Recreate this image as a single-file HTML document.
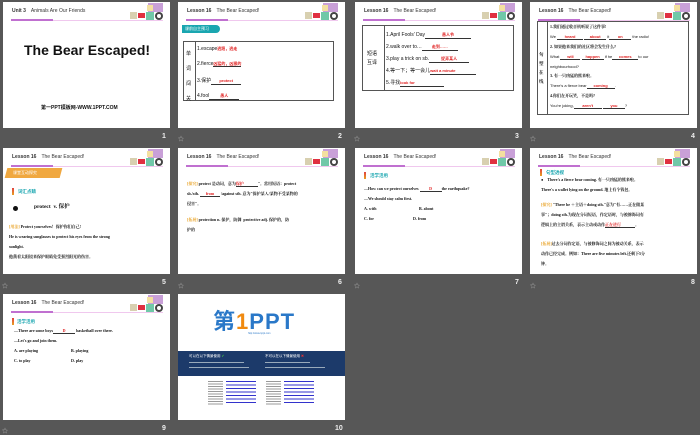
<!DOCTYPE html>
<html><head><meta charset="utf-8"><style>
*{margin:0;padding:0;box-sizing:border-box}
body{width:700px;height:433px;background:#575757;position:relative;overflow:hidden;font-family:"Liberation Sans","Noto Sans CJK SC",sans-serif}
.s{position:absolute;width:167px;height:126px;background:#fff;overflow:hidden}
.n{position:absolute;color:#eee;font-size:7px;font-weight:bold}
.st{position:absolute;color:#bbb;font-size:6px}
.hd{position:absolute;left:9px;top:6px;font-size:5px;color:#333}
.hd b{margin-right:5px}
.l1{position:absolute;left:8px;top:17px;width:42px;height:2px;background:#c070d0}
.l2{position:absolute;left:50px;top:17.5px;width:110px;height:1px;background:#f0c8ee}
.dec{position:absolute;left:127px;top:1px;width:34px;height:19px}
.t{position:absolute;font-size:4.6px;color:#111;white-space:nowrap;line-height:1}
.sf{font-family:"Liberation Serif","Noto Serif CJK SC",serif;font-weight:bold}
.r{color:#e02020;font-weight:bold}
.c{color:#1aa6b0;font-weight:bold}
.y{color:#e8a020}
.bar{position:absolute;width:2px;height:7px;background:linear-gradient(#e04040,#e8a020)}
</style></head><body>

<!-- Slide 1 -->
<div class="s" style="left:3px;top:2px">
<div class="hd"><b>Unit 3</b>Animals Are Our Friends</div>
<div class="l1"></div><div class="l2"></div>
<svg class="dec" viewBox="0 0 34 19"><rect x="18" y="0" width="15" height="9" fill="#c9a0d8"/><rect x="17" y="2" width="6" height="6" fill="#f4e0a0"/><rect x="0" y="9" width="7" height="7" fill="#d8d0b0"/><rect x="8" y="10" width="7" height="5" fill="#e03040"/><rect x="16" y="9" width="8" height="8" fill="#70c8a8"/><circle cx="29" cy="13" r="4" fill="#444"/><circle cx="29" cy="13" r="2" fill="#fff"/></svg>
<div class="t" style="left:21px;top:41px;font-size:14px;font-weight:bold;color:#111">The Bear Escaped!</div>
<div class="t" style="left:38px;top:104px;font-size:5px;font-weight:bold">第一PPT模板网-WWW.1PPT.COM</div>
</div>
<div class="n" style="left:162px;top:133px">1</div>

<!-- Slide 2 -->
<div class="s" style="left:178px;top:2px">
<div class="hd"><b>Lesson 16</b>The Bear Escaped!</div>
<div class="l1"></div><div class="l2"></div>
<svg class="dec" viewBox="0 0 34 19"><rect x="18" y="0" width="15" height="9" fill="#c9a0d8"/><rect x="17" y="2" width="6" height="6" fill="#f4e0a0"/><rect x="0" y="9" width="7" height="7" fill="#d8d0b0"/><rect x="8" y="10" width="7" height="5" fill="#e03040"/><rect x="16" y="9" width="8" height="8" fill="#70c8a8"/><circle cx="29" cy="13" r="4" fill="#444"/><circle cx="29" cy="13" r="2" fill="#fff"/></svg>
<div style="position:absolute;left:4px;top:23px;width:38px;height:8px;background:#1aa6b0;border-radius:0 4px 4px 0"></div>
<div class="t" style="left:7px;top:25px;color:#fff;font-size:4px">课前自主预习</div>
<div style="position:absolute;left:5px;top:39px;width:151px;height:60px;border:1px solid #555"></div>
<div style="position:absolute;left:17px;top:39px;width:1px;height:60px;background:#555"></div>
<div class="t" style="left:8px;top:45px;font-size:5px;line-height:15px;white-space:normal;width:8px">单词闯关</div>
<div class="t" style="left:19px;top:45px;font-size:5px">1.escape<span class="r" style="font-size:4px">逃跑，逃走</span></div>
<div class="t" style="left:19px;top:60px;font-size:5px">2.fierce<span class="r" style="font-size:4px;border-bottom:.5px solid #333">凶猛的，凶狠的</span></div>
<div class="t" style="left:19px;top:77px;font-size:5px">3.保护<span style="border-bottom:.5px solid #333;display:inline-block;width:30px;text-align:center"><span class="r" style="font-size:4px">protect</span></span></div>
<div class="t" style="left:19px;top:92px;font-size:5px">4.fool<span style="border-bottom:.5px solid #333;display:inline-block;width:30px;text-align:center"><span class="r" style="font-size:4px">愚人</span></span></div>
</div>
<div class="st" style="left:178px;top:134px">☆</div>
<div class="n" style="left:338px;top:133px">2</div>

<!-- Slide 3 -->
<div class="s" style="left:355px;top:2px">
<div class="hd"><b>Lesson 16</b>The Bear Escaped!</div>
<div class="l1"></div><div class="l2"></div>
<svg class="dec" viewBox="0 0 34 19"><rect x="18" y="0" width="15" height="9" fill="#c9a0d8"/><rect x="17" y="2" width="6" height="6" fill="#f4e0a0"/><rect x="0" y="9" width="7" height="7" fill="#d8d0b0"/><rect x="8" y="10" width="7" height="5" fill="#e03040"/><rect x="16" y="9" width="8" height="8" fill="#70c8a8"/><circle cx="29" cy="13" r="4" fill="#444"/><circle cx="29" cy="13" r="2" fill="#fff"/></svg>
<div style="position:absolute;left:7px;top:23px;width:152px;height:66px;border:1px solid #555"></div>
<div style="position:absolute;left:29px;top:23px;width:1px;height:66px;background:#555"></div>
<div class="t" style="left:12px;top:48px;font-size:5px;line-height:9px;white-space:normal;width:12px">短语互译</div>
<div class="t" style="left:31px;top:31px;font-size:5px">1.April Fools' Day<span style="border-bottom:.5px solid #333;display:inline-block;width:46px;text-align:center"><span class="r" style="font-size:4px">愚人节</span></span></div>
<div class="t" style="left:31px;top:43px;font-size:5px">2.walk over to…<span style="border-bottom:.5px solid #333;display:inline-block;width:36px;text-align:center"><span class="r" style="font-size:4px">走到……</span></span></div>
<div class="t" style="left:31px;top:55px;font-size:5px">3.play a trick on sb.<span style="border-bottom:.5px solid #333;display:inline-block;width:40px;text-align:center"><span class="r" style="font-size:4px">捉弄某人</span></span></div>
<div class="t" style="left:31px;top:67px;font-size:5px">4.等一下；等一会儿<span style="border-bottom:.5px solid #333;display:inline-block;width:46px"><span class="r" style="font-size:4px">wait a minute</span></span></div>
<div class="t" style="left:31px;top:79px;font-size:5px">5.寻找<span style="border-bottom:.5px solid #333;display:inline-block;width:44px"><span class="r" style="font-size:4px">look for</span></span></div>
</div>
<div class="st" style="left:354px;top:134px">☆</div>
<div class="n" style="left:515px;top:133px">3</div>

<!-- Slide 4 -->
<div class="s" style="left:530px;top:2px">
<div class="hd"><b>Lesson 16</b>The Bear Escaped!</div>
<div class="l1"></div><div class="l2"></div>
<svg class="dec" viewBox="0 0 34 19"><rect x="18" y="0" width="15" height="9" fill="#c9a0d8"/><rect x="17" y="2" width="6" height="6" fill="#f4e0a0"/><rect x="0" y="9" width="7" height="7" fill="#d8d0b0"/><rect x="8" y="10" width="7" height="5" fill="#e03040"/><rect x="16" y="9" width="8" height="8" fill="#70c8a8"/><circle cx="29" cy="13" r="4" fill="#444"/><circle cx="29" cy="13" r="2" fill="#fff"/></svg>
<div style="position:absolute;left:7px;top:19px;width:152px;height:94px;border:1px solid #555"></div>
<div style="position:absolute;left:17px;top:19px;width:1px;height:94px;background:#555"></div>
<div class="t sf" style="left:9px;top:48px;font-size:4.5px;line-height:9px;white-space:normal;width:7px">句型在线</div>
<div class="t sf" style="left:20px;top:23px;font-size:4px">1.我们通过收音机听说了这件事!</div>
<div class="t" style="left:20px;top:33px;font-size:4px">We <span class="r" style="display:inline-block;width:26px;border-bottom:.5px solid #333;text-align:center">heard</span> <span class="r" style="display:inline-block;width:22px;border-bottom:.5px solid #333;text-align:center">about</span> it<span class="r" style="display:inline-block;width:22px;border-bottom:.5px solid #333;text-align:center">on</span> the radio!</div>
<div class="t sf" style="left:20px;top:43px;font-size:4px">2. 如果他来我们的社区将会发生什么?</div>
<div class="t" style="left:20px;top:53px;font-size:4px">What <span class="r" style="display:inline-block;width:20px;border-bottom:.5px solid #333;text-align:center">will</span> <span class="r" style="display:inline-block;width:22px;border-bottom:.5px solid #333;text-align:center">happen</span> if he<span class="r" style="display:inline-block;width:26px;border-bottom:.5px solid #333;text-align:center">comes</span>to our</div>
<div class="t" style="left:20px;top:63px;font-size:4px">neighbourhood?</div>
<div class="t sf" style="left:20px;top:72px;font-size:4px">3. 有一只凶猛的熊来啦。</div>
<div class="t" style="left:20px;top:82px;font-size:4px">There's a fierce bear<span class="r" style="display:inline-block;width:28px;border-bottom:.5px solid #333;text-align:center">coming</span>.</div>
<div class="t sf" style="left:20px;top:92px;font-size:4px">4.你们在开玩笑，不是吗?</div>
<div class="t" style="left:20px;top:102px;font-size:4px">You're joking,<span class="r" style="display:inline-block;width:28px;border-bottom:.5px solid #333;text-align:center">aren't</span> <span class="r" style="display:inline-block;width:22px;border-bottom:.5px solid #333;text-align:center">you</span>?</div>
</div>
<div class="st" style="left:530px;top:134px">☆</div>
<div class="n" style="left:691px;top:133px">4</div>

<!-- Slide 5 -->
<div class="s" style="left:3px;top:148px">
<div class="hd"><b>Lesson 16</b>The Bear Escaped!</div>
<div class="l1"></div><div class="l2"></div>
<svg class="dec" viewBox="0 0 34 19"><rect x="18" y="0" width="15" height="9" fill="#c9a0d8"/><rect x="17" y="2" width="6" height="6" fill="#f4e0a0"/><rect x="0" y="9" width="7" height="7" fill="#d8d0b0"/><rect x="8" y="10" width="7" height="5" fill="#e03040"/><rect x="16" y="9" width="8" height="8" fill="#70c8a8"/><circle cx="29" cy="13" r="4" fill="#444"/><circle cx="29" cy="13" r="2" fill="#fff"/></svg>
<div style="position:absolute;left:3px;top:20px;width:55px;height:10px;background:#f0a840;transform:skewX(-15deg)"></div>
<div class="t" style="left:10px;top:23px;color:#fff;font-size:4px">课堂互动探究</div>
<div class="bar" style="left:9px;top:40px"></div>
<div class="t c" style="left:15px;top:42px;font-size:4.5px">词汇点睛</div>
<div style="position:absolute;left:10px;top:58px;width:5px;height:5px;border-radius:50%;background:#111"></div>
<div class="t sf" style="left:31px;top:57px;font-size:5.5px">protect &nbsp;v. 保护</div>
<div class="t sf" style="left:6px;top:77px;font-size:4px"><span class="y">[用法]</span> Protect yourselves！保护你们自己!</div>
<div class="t sf" style="left:6px;top:87px;font-size:4px">He is wearing sunglasses to protect his eyes from the strong</div>
<div class="t sf" style="left:6px;top:97px;font-size:4px">sunlight.</div>
<div class="t sf" style="left:6px;top:107px;font-size:4px">他戴着太阳镜来保护眼睛免受强烈阳光的伤害。</div>
</div>
<div class="st" style="left:2px;top:281px">☆</div>
<div class="n" style="left:162px;top:279px">5</div>

<!-- Slide 6 -->
<div class="s" style="left:178px;top:148px">
<div class="hd"><b>Lesson 16</b>The Bear Escaped!</div>
<div class="l1"></div><div class="l2"></div>
<svg class="dec" viewBox="0 0 34 19"><rect x="18" y="0" width="15" height="9" fill="#c9a0d8"/><rect x="17" y="2" width="6" height="6" fill="#f4e0a0"/><rect x="0" y="9" width="7" height="7" fill="#d8d0b0"/><rect x="8" y="10" width="7" height="5" fill="#e03040"/><rect x="16" y="9" width="8" height="8" fill="#70c8a8"/><circle cx="29" cy="13" r="4" fill="#444"/><circle cx="29" cy="13" r="2" fill="#fff"/></svg>
<div class="t sf" style="left:9px;top:34px;font-size:4px"><span class="y">[探究]</span> protect 是动词，意为<span class="r" style="display:inline-block;width:22px;border-bottom:.5px solid #333">保护</span>"。常用短语：protect</div>
<div class="t sf" style="left:9px;top:44px;font-size:4px">sb./sth. <span class="r" style="display:inline-block;width:20px;border-bottom:.5px solid #333;text-align:center">from</span> /against sth. 意为"保护某人/某物不受某物的</div>
<div class="t sf" style="left:9px;top:54px;font-size:4px">侵害"。</div>
<div class="t sf" style="left:9px;top:70px;font-size:4px"><span class="y">[拓展]</span> protection n. 保护，防御 &nbsp;protective adj. 保护的，防</div>
<div class="t sf" style="left:9px;top:80px;font-size:4px">护的</div>
</div>
<div class="st" style="left:178px;top:281px">☆</div>
<div class="n" style="left:338px;top:279px">6</div>

<!-- Slide 7 -->
<div class="s" style="left:355px;top:148px">
<div class="hd"><b>Lesson 16</b>The Bear Escaped!</div>
<div class="l1"></div><div class="l2"></div>
<svg class="dec" viewBox="0 0 34 19"><rect x="18" y="0" width="15" height="9" fill="#c9a0d8"/><rect x="17" y="2" width="6" height="6" fill="#f4e0a0"/><rect x="0" y="9" width="7" height="7" fill="#d8d0b0"/><rect x="8" y="10" width="7" height="5" fill="#e03040"/><rect x="16" y="9" width="8" height="8" fill="#70c8a8"/><circle cx="29" cy="13" r="4" fill="#444"/><circle cx="29" cy="13" r="2" fill="#fff"/></svg>
<div class="bar" style="left:9px;top:24px"></div>
<div class="t c" style="left:15px;top:26px;font-size:4.5px">活学活用</div>
<div class="t sf" style="left:9px;top:39px;font-size:4px">—How can we protect ourselves <span class="r" style="display:inline-block;width:22px;border-bottom:.5px solid #333;text-align:center">D</span>the earthquake?</div>
<div class="t sf" style="left:9px;top:49px;font-size:4px">—We should stay calm first.</div>
<div class="t sf" style="left:9px;top:59px;font-size:4px">A. with</div><div class="t sf" style="left:64px;top:59px;font-size:4px">B. about</div>
<div class="t sf" style="left:9px;top:69px;font-size:4px">C. for</div><div class="t sf" style="left:58px;top:69px;font-size:4px">D. from</div>
</div>
<div class="st" style="left:354px;top:281px">☆</div>
<div class="n" style="left:515px;top:279px">7</div>

<!-- Slide 8 -->
<div class="s" style="left:530px;top:148px">
<div class="hd"><b>Lesson 16</b>The Bear Escaped!</div>
<div class="l1"></div><div class="l2"></div>
<svg class="dec" viewBox="0 0 34 19"><rect x="18" y="0" width="15" height="9" fill="#c9a0d8"/><rect x="17" y="2" width="6" height="6" fill="#f4e0a0"/><rect x="0" y="9" width="7" height="7" fill="#d8d0b0"/><rect x="8" y="10" width="7" height="5" fill="#e03040"/><rect x="16" y="9" width="8" height="8" fill="#70c8a8"/><circle cx="29" cy="13" r="4" fill="#444"/><circle cx="29" cy="13" r="2" fill="#fff"/></svg>
<div class="bar" style="left:10px;top:21px"></div>
<div class="t c" style="left:16px;top:23px;font-size:4.5px">句型透视</div>
<div class="t sf" style="left:11px;top:30px;font-size:4px">● &nbsp;&nbsp;&nbsp;There's a fierce bear coming. 有一只凶猛的熊来啦。</div>
<div class="t sf" style="left:11px;top:40px;font-size:4px">There's a wallet lying on the ground. 地上有个钱包。</div>
<div class="t sf" style="left:11px;top:55px;font-size:4px"><span class="y">[探究]</span> "There be ＋主语＋doing sth."意为"有……正在做某</div>
<div class="t sf" style="left:11px;top:65px;font-size:4px">事"；doing sth.为现在分词短语，作定语时，与被修饰词有</div>
<div class="t sf" style="left:11px;top:75px;font-size:4px">逻辑上的主谓关系，表示主动或动作<span class="r" style="display:inline-block;width:30px;border-bottom:.5px solid #333">正在进行</span>。</div>
<div class="t sf" style="left:11px;top:94px;font-size:4px"><span class="y">[拓展]</span>过去分词作定语，与被修饰词之间为被动关系，表示</div>
<div class="t sf" style="left:11px;top:104px;font-size:4px">动作已经完成。例如：There are five minutes left.还剩下5分</div>
<div class="t sf" style="left:11px;top:114px;font-size:4px">钟。</div>
</div>
<div class="st" style="left:530px;top:281px">☆</div>
<div class="n" style="left:691px;top:279px">8</div>

<!-- Slide 9 -->
<div class="s" style="left:3px;top:294px">
<div class="hd"><b>Lesson 16</b>The Bear Escaped!</div>
<div class="l1"></div><div class="l2"></div>
<svg class="dec" viewBox="0 0 34 19"><rect x="18" y="0" width="15" height="9" fill="#c9a0d8"/><rect x="17" y="2" width="6" height="6" fill="#f4e0a0"/><rect x="0" y="9" width="7" height="7" fill="#d8d0b0"/><rect x="8" y="10" width="7" height="5" fill="#e03040"/><rect x="16" y="9" width="8" height="8" fill="#70c8a8"/><circle cx="29" cy="13" r="4" fill="#444"/><circle cx="29" cy="13" r="2" fill="#fff"/></svg>
<div class="bar" style="left:9px;top:24px"></div>
<div class="t c" style="left:14px;top:26px;font-size:4.5px">活学活用</div>
<div class="t sf" style="left:11px;top:35px;font-size:4px">—There are some boys<span class="r" style="display:inline-block;width:22px;border-bottom:.5px solid #333;text-align:center">D</span> basketball over there.</div>
<div class="t sf" style="left:11px;top:45px;font-size:4px">—Let's go and join them.</div>
<div class="t sf" style="left:11px;top:55px;font-size:4px">A. are playing</div><div class="t sf" style="left:68px;top:55px;font-size:4px">B. playing</div>
<div class="t sf" style="left:11px;top:65px;font-size:4px">C. to play</div><div class="t sf" style="left:68px;top:65px;font-size:4px">D. play</div>
</div>
<div class="st" style="left:2px;top:426px">☆</div>
<div class="n" style="left:162px;top:425px">9</div>

<!-- Slide 10 -->
<div class="s" style="left:178px;top:294px">
<div class="t" style="left:35px;top:17px;font-size:22px;font-weight:bold;color:#2a78c8;letter-spacing:1px">第<span style="color:#f08a10">1</span>PPT</div>
<div class="t" style="left:70px;top:39px;font-size:2.5px;color:#2a78c8">http://www.1ppt.com</div>
<div style="position:absolute;left:0;top:57px;width:167px;height:25px;background:#1c3a6a"></div>
<div class="t" style="left:11px;top:61px;color:#fff;font-size:3.5px">可以在以下情景使用 <span style="color:#4c4">✔</span></div>
<div class="t" style="left:87px;top:61px;color:#fff;font-size:3.5px">不可以在以下情景使用 <span style="color:#e33">✖</span></div>
<div style="position:absolute;left:11px;top:68px;width:55px;height:1px;background:#9ab"></div>
<div style="position:absolute;left:11px;top:73px;width:60px;height:1px;background:#9ab"></div>
<div style="position:absolute;left:87px;top:68px;width:45px;height:1px;background:#9ab"></div>
<div style="position:absolute;left:87px;top:73px;width:60px;height:1px;background:#9ab"></div>
<div style="position:absolute;left:30px;top:87px;width:15px;height:24px;background:repeating-linear-gradient(#999 0 1px,#fff 1px 2.5px)"></div>
<div style="position:absolute;left:48px;top:87px;width:30px;height:24px;background:repeating-linear-gradient(#33c 0 1px,#fff 1px 3.5px)"></div>
<div style="position:absolute;left:88px;top:87px;width:15px;height:24px;background:repeating-linear-gradient(#999 0 1px,#fff 1px 2.5px)"></div>
<div style="position:absolute;left:106px;top:87px;width:30px;height:24px;background:repeating-linear-gradient(#33c 0 1px,#fff 1px 3.5px)"></div>
</div>
<div class="n" style="left:335px;top:425px">10</div>
</body></html>
